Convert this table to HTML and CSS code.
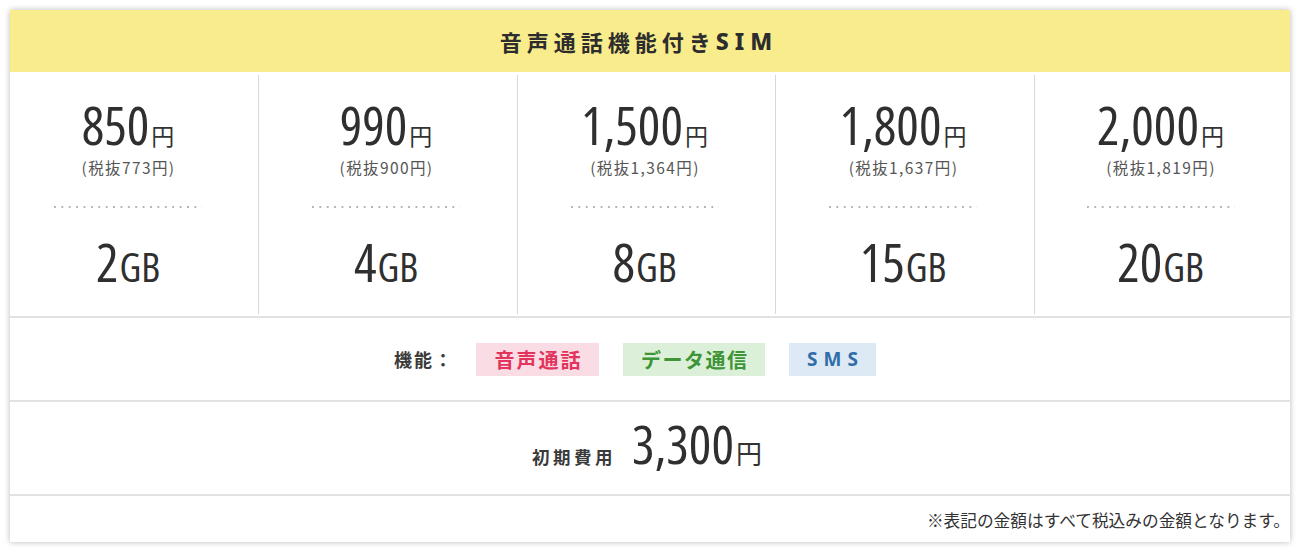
FILE: index.html
```html
<!DOCTYPE html>
<html lang="ja">
<head>
<meta charset="utf-8">
<title>音声通話機能付きSIM</title>
<link rel="stylesheet" href="styles.css">
</head>
<body>
<div class="card">
  <div class="card-head">音声通話機能付き<span class="head-latin">SIM</span></div>
  <div class="plans">
    <div class="plan plan-first">
      <div class="price"><span class="num">850</span><span class="yen">円</span></div>
      <div class="tax">(税抜773円)</div>
      <div class="dots"></div>
      <div class="data"><span class="num">2</span><span class="unit">GB</span></div>
    </div>
    <div class="plan">
      <div class="price"><span class="num">990</span><span class="yen">円</span></div>
      <div class="tax">(税抜900円)</div>
      <div class="dots"></div>
      <div class="data"><span class="num">4</span><span class="unit">GB</span></div>
    </div>
    <div class="plan">
      <div class="price"><span class="num">1,500</span><span class="yen">円</span></div>
      <div class="tax">(税抜1,364円)</div>
      <div class="dots"></div>
      <div class="data"><span class="num">8</span><span class="unit">GB</span></div>
    </div>
    <div class="plan">
      <div class="price"><span class="num">1,800</span><span class="yen">円</span></div>
      <div class="tax">(税抜1,637円)</div>
      <div class="dots"></div>
      <div class="data"><span class="num">15</span><span class="unit">GB</span></div>
    </div>
    <div class="plan">
      <div class="price"><span class="num">2,000</span><span class="yen">円</span></div>
      <div class="tax">(税抜1,819円)</div>
      <div class="dots"></div>
      <div class="data"><span class="num">20</span><span class="unit">GB</span></div>
    </div>
  </div>
  <div class="features">
    <span class="feat-label">機能：</span>
    <span class="tag tag-voice">音声通話</span>
    <span class="tag tag-data">データ通信</span>
    <span class="tag tag-sms">SMS</span>
  </div>
  <div class="fee">
    <span class="fee-label">初期費用</span>
    <span class="num">3,300</span><span class="fee-yen">円</span>
  </div>
  <div class="note">※表記の金額はすべて税込みの金額となります。</div>
</div>
</body>
</html>
```
FILE: styles.css
```css
html, body {
  margin: 0;
  padding: 0;
  background: #ffffff;
}
body {
  font-family: "Noto Sans CJK JP", "Noto Sans", sans-serif;
  color: #333333;
  padding: 10px;
}
.card {
  width: 1280px;
  height: 532px;
  background: #ffffff;
  box-shadow: 0 0 6px rgba(0, 0, 0, 0.28);
  display: flex;
  flex-direction: column;
}
.card-head {
  height: 62px;
  background: #f9ec8c;
  display: flex;
  align-items: center;
  justify-content: center;
  font-size: 22px;
  font-weight: 700;
  letter-spacing: 5px;
  padding-right: 22px;
  color: #2d2d2d;
  box-sizing: border-box;
}
.head-latin {
  font-family: "Noto Sans", sans-serif;
  font-size: 23px;
  font-weight: 800;
  letter-spacing: 6px;
}
.plans {
  display: grid;
  grid-template-columns: 248px 259px 258px 259px 256px;
  padding: 3px 0 2px;
  border-bottom: 2px solid #e2e2e2;
}
.plan {
  height: 239px;
  border-left: 1px solid #d8d8d8;
  display: flex;
  flex-direction: column;
  align-items: center;
  box-sizing: border-box;
  padding-top: 23px;
  padding-right: 4px;
}
.plan-first {
  border-left: none;
  padding-right: 12px;
}
.num {
  font-family: "Open Sans", "Roboto Condensed", sans-serif;
  font-stretch: 75%;
  font-weight: 500;
  font-size: 53px;
  line-height: 1;
  color: #2f2f2f;
}
.price, .data {
  display: flex;
  align-items: baseline;
  line-height: 1;
}
.yen {
  font-size: 23px;
  margin-left: 2px;
  color: #333;
}
.tax {
  margin-top: 6px;
  font-size: 15.5px;
  line-height: 20px;
  color: #555555;
  letter-spacing: 1.4px;
  padding-left: 1px;
}
.dots {
  margin-top: 29px;
  width: 148px;
  height: 2px;
  background-image: linear-gradient(to right, #b4b4b4 2px, transparent 2px);
  background-size: 7.4px 2px;
  background-repeat: repeat-x;
}
.data {
  margin-top: 27px;
}
.unit {
  font-family: "Open Sans", "Roboto Condensed", sans-serif;
  font-stretch: 75%;
  font-weight: 500;
  font-size: 40px;
  margin-left: 1px;
  color: #2f2f2f;
}
.features {
  height: 82px;
  display: flex;
  align-items: center;
  justify-content: center;
  padding-right: 30px;
  border-bottom: 2px solid #e2e2e2;
}
.feat-label {
  font-size: 18px;
  font-weight: 700;
  letter-spacing: 2px;
  margin-right: 22px;
  color: #3a3a3a;
}
.tag {
  height: 33px;
  display: inline-flex;
  align-items: center;
  justify-content: center;
  font-size: 20px;
  font-weight: 700;
  box-sizing: border-box;
  margin-right: 24px;
}
.tag-voice {
  width: 123px;
  background: #fadce4;
  color: #e2345d;
  letter-spacing: 2px;
  padding-left: 2px;
}
.tag-data {
  width: 142px;
  background: #dcf0d9;
  color: #3e9436;
  letter-spacing: 1.5px;
  padding-left: 1.5px;
}
.tag-sms {
  width: 87px;
  background: #dde9f4;
  color: #2f6ea8;
  letter-spacing: 6px;
  padding-left: 6px;
  margin-right: 0;
  font-family: "Noto Sans", sans-serif;
  font-size: 19px;
}
.fee {
  height: 94px;
  display: flex;
  align-items: baseline;
  justify-content: center;
  padding-top: 15px;
  padding-right: 6px;
  box-sizing: border-box;
  border-bottom: 2px solid #e2e2e2;
}
.fee-label {
  font-size: 17.5px;
  font-weight: 700;
  letter-spacing: 3.5px;
  margin-right: 16px;
  color: #3a3a3a;
}
.fee-yen {
  font-size: 26px;
  margin-left: 2px;
  color: #333;
}
.note {
  flex: 1;
  display: flex;
  align-items: center;
  justify-content: flex-end;
  padding-right: 0;
  padding-top: 2px;
  font-size: 16.7px;
  color: #333333;
}
```
